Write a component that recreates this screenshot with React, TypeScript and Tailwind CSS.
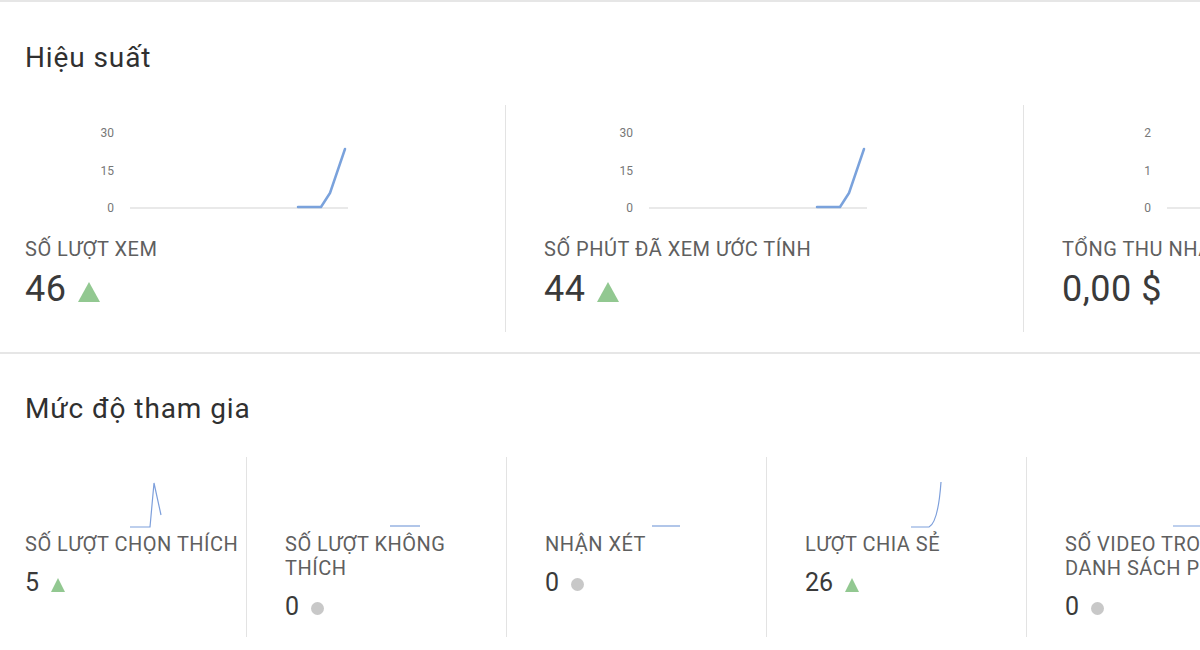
import React from 'react'

const FONT = { fontFamily: 'Roboto, "Noto Sans", "Liberation Sans", sans-serif' }

type Perf = {
  label: string
  value: string
  ticks: string[]
  line: string | null
  up: boolean
}

const perf: Perf[] = [
  { label: 'SỐ LƯỢT XEM', value: '46', ticks: ['30', '15', '0'], line: '168,81 191,81 200,67 215,23', up: true },
  { label: 'SỐ PHÚT ĐÃ XEM ƯỚC TÍNH', value: '44', ticks: ['30', '15', '0'], line: '168,81 191,81 200,67 215,23', up: true },
  { label: 'TỔNG THU NHẬP (ƯỚC TÍNH)', value: '0,00 $', ticks: ['2', '1', '0'], line: null, up: false },
]

type Eng = {
  label: string
  value: string
  path: string
  up: boolean
  labelW: string
}

const engagement: Eng[] = [
  { label: 'SỐ LƯỢT CHỌN THÍCH', value: '5', path: 'M0 49 L20 49 L24 5 L31 37', up: true, labelW: 'max-w-[221px]' },
  { label: 'SỐ LƯỢT KHÔNG THÍCH', value: '0', path: 'M0 48 L30 48', up: false, labelW: 'max-w-[221px]' },
  { label: 'NHẬN XÉT', value: '0', path: 'M2 48 L30 48', up: false, labelW: 'max-w-[221px]' },
  { label: 'LƯỢT CHIA SẺ', value: '26', path: 'M1 49 L19 49 C25 46 29 32 31 4', up: true, labelW: 'max-w-[221px]' },
  { label: 'SỐ VIDEO TRONG DANH SÁCH PHÁT', value: '0', path: 'M3 48 L40 48', up: false, labelW: 'max-w-[200px]' },
]

function BigUp() {
  return (
    <svg width="22" height="20" viewBox="0 0 22 20" className="mt-[6px] shrink-0">
      <polygon points="11,0 22,20 0,20" fill="#92c891" />
    </svg>
  )
}

function SmallUp() {
  return (
    <svg width="14" height="14" viewBox="0 0 14 14" className="mt-[4px] shrink-0">
      <polygon points="7,0 14,14 0,14" fill="#92c891" />
    </svg>
  )
}

function Dot() {
  return <span className="w-[13px] h-[13px] rounded-full bg-[#c8c8c8] mt-[2px] shrink-0" />
}

function PerfCol({ p, idx }: { p: Perf; idx: number }) {
  const wrap = idx === 0 ? 'w-[480px]' : 'w-[518px] border-l border-[#e3e3e3] pl-[38px]'
  return (
    <div className={`${wrap} h-[227px] shrink-0 pt-[21px]`}>
      <div className="flex h-[89px]">
        <div className="w-[89px] shrink-0 flex flex-col justify-between text-right text-[12px] leading-[14px] text-[#777]">
          {p.ticks.map(t => <span key={t}>{t}</span>)}
        </div>
        <svg width="218" height="89" viewBox="0 0 218 89" className="ml-[16px] shrink-0 overflow-visible">
          <line x1="0" y1="82" x2="218" y2="82" stroke="#e2e2e2" strokeWidth="1.5" />
          {p.line && (
            <polyline points={p.line} fill="none" stroke="#7aa2dc" strokeWidth="2.5" strokeLinejoin="round" strokeLinecap="round" />
          )}
        </svg>
      </div>
      <p className="mt-[22px] text-[20px] leading-[24px] tracking-[0.5px] text-[#5f5f5f] whitespace-nowrap">{p.label}</p>
      <div className="mt-[8px] flex items-center gap-[12px]">
        <span className="text-[36px] leading-[40px] tracking-[0.5px] text-[#3a3a3a] whitespace-nowrap">{p.value}</span>
        {p.up && <BigUp />}
      </div>
    </div>
  )
}

function EngCol({ e, idx }: { e: Eng; idx: number }) {
  const wrap = idx === 0 ? 'w-[221px]' : 'w-[260px] border-l border-[#e3e3e3] pl-[38px]'
  return (
    <div className={`${wrap} h-[180px] shrink-0`}>
      <div className="h-[71px] flex items-end">
        <svg width="40" height="50" viewBox="0 0 40 50" className="ml-[105px] overflow-visible">
          <path d={e.path} fill="none" stroke="#7d9fdb" strokeWidth="1.2" />
        </svg>
      </div>
      <p className={`mt-[4px] text-[20px] leading-[24px] tracking-[0.5px] text-[#5f5f5f] ${e.labelW}`}>{e.label}</p>
      <div className="mt-[12px] flex items-center gap-[12px]">
        <span className="text-[25px] leading-[30px] text-[#3a3a3a]">{e.value}</span>
        {e.up ? <SmallUp /> : <Dot />}
      </div>
    </div>
  )
}

export default function App() {
  return (
    <div className="w-[1200px] h-[650px] overflow-hidden bg-white" style={FONT}>
      <section className="border-t-2 border-[#e6e6e6] border-b-2 border-b-[#e6e6e6] pt-[40px] pl-[25px] pb-[20px]">
        <h2 className="text-[28px] leading-[32px] tracking-[0.9px] text-[#303030]">Hiệu suất</h2>
        <div className="mt-[31px] flex">
          {perf.map((p, i) => <PerfCol key={p.label} p={p} idx={i} />)}
        </div>
      </section>

      <section className="pt-[39px] pl-[25px]">
        <h2 className="text-[28px] leading-[32px] tracking-[0.9px] text-[#303030]">Mức độ tham gia</h2>
        <div className="mt-[32px] flex">
          {engagement.map((e, i) => <EngCol key={e.label} e={e} idx={i} />)}
        </div>
      </section>
    </div>
  )
}
